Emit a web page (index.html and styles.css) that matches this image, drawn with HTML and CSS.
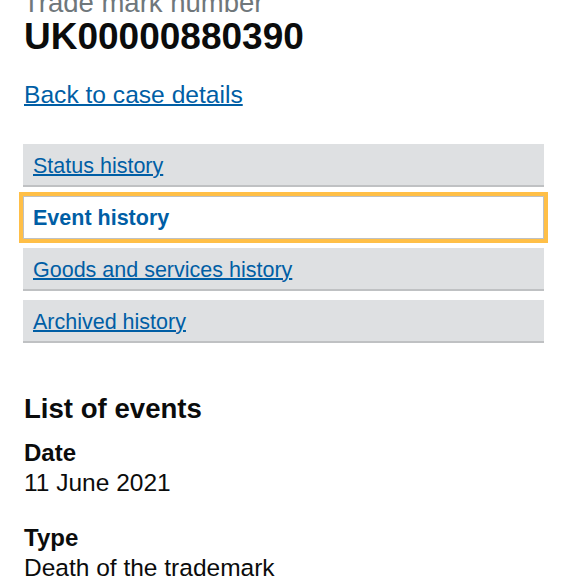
FILE: index.html
```html
<!DOCTYPE html>
<html lang="en">
<head>
<meta charset="utf-8">
<title>Event history</title>
<link rel="stylesheet" href="styles.css">
</head>
<body>
<main class="page">
  <span class="caption">Trade mark number</span>
  <h1 class="title">UK00000880390</h1>
  <a class="back-link" href="#">Back to case details</a>
  <nav class="tabs">
    <a class="tab" href="#">Status history</a>
    <span class="tab tab-active">Event history</span>
    <a class="tab" href="#">Goods and services history</a>
    <a class="tab" href="#">Archived history</a>
  </nav>
  <h2 class="section-title">List of events</h2>
  <dl class="events">
    <div class="event-row">
      <dt class="label">Date</dt>
      <dd class="value">11 June 2021</dd>
    </div>
    <div class="event-row">
      <dt class="label">Type</dt>
      <dd class="value">Death of the trademark</dd>
    </div>
  </dl>
</main>
</body>
</html>
```

FILE: styles.css
```css
html, body {
  margin: 0;
  padding: 0;
  background: #ffffff;
}

body {
  font-family: "Liberation Sans", Arial, Helvetica, sans-serif;
  color: #0b0c0c;
}

.page {
  display: flex;
  flex-direction: column;
  align-items: flex-start;
  width: 521px;
  padding: 0 23px;
}

.caption {
  display: block;
  margin-top: -11px;
  font-size: 27.5px;
  line-height: 28px;
  color: #6f777b;
}

.title {
  margin: 0;
  font-size: 37px;
  font-weight: bold;
  line-height: 40px;
  padding-left: 1px;
}

.back-link {
  margin-top: 24px;
  font-size: 24.6px;
  line-height: 28px;
  color: #005ea5;
  text-decoration: underline;
  text-decoration-thickness: 1.5px;
  padding-left: 1px;
}

.tabs {
  display: flex;
  flex-direction: column;
  gap: 9px;
  align-self: stretch;
  margin-top: 35px;
}

.tab {
  display: block;
  height: 43px;
  box-sizing: border-box;
  padding: 10px 10px 6px;
  line-height: 25px;
  font-size: 21.5px;
  background: #dee0e2;
  border-bottom: 2px solid #bfc1c3;
  color: #005ea5;
  text-decoration: underline;
  text-decoration-thickness: 1.5px;
}

.tab-active {
  background: #ffffff;
  border: 1px solid #bfc1c3;
  padding: 9px 9px 7px;
  font-weight: bold;
  text-decoration: none;
  outline: 4px solid #ffbf47;
}

.section-title {
  margin: 50px 0 0;
  font-size: 27.6px;
  font-weight: bold;
  line-height: 32px;
  padding-left: 1px;
}

.events {
  margin: 13px 0 0;
  display: flex;
  flex-direction: column;
  gap: 25px;
  padding-left: 1px;
}

.event-row {
  display: flex;
  flex-direction: column;
}

.label {
  font-size: 24px;
  font-weight: bold;
  line-height: 30px;
}

.value {
  margin: 0;
  font-size: 24.5px;
  line-height: 30px;
}
```
